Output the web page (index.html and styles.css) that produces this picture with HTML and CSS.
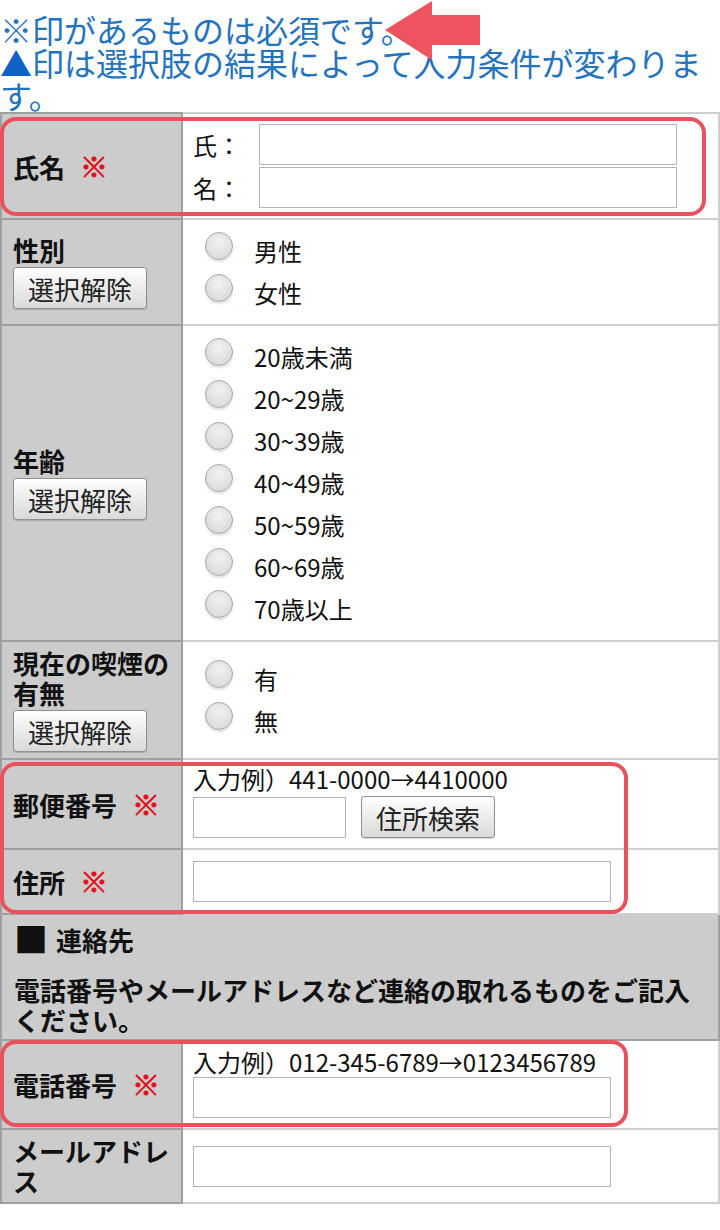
FILE: index.html
```html
<!DOCTYPE html>
<html>
<head>
  <meta charset="utf-8" />
  <title>お問い合わせフォーム</title>
  <link rel="stylesheet" href="styles.css">
</head>
<body>
  <div class="page">
    <div class="notes">
      <p>※印があるものは必須です。</p>
      <p><span class="tri">▲</span>印は選択肢の結果によって入力条件が変わります。</p>
    </div>

    <table class="form">
      <colgroup><col class="c-label"><col></colgroup>
      <tr class="r-name">
        <th>氏名<span class="req">※</span></th>
        <td>
          <div class="name-row"><span class="name-label">氏：</span><input class="text" type="text"></div>
          <div class="name-row"><span class="name-label">名：</span><input class="text" type="text"></div>
        </td>
      </tr>
      <tr>
        <th>性別<br><button class="btn">選択解除</button></th>
        <td>
          <label class="opt"><input type="radio" name="sex"><span>男性</span></label>
          <label class="opt"><input type="radio" name="sex"><span>女性</span></label>
        </td>
      </tr>
      <tr>
        <th>年齢<br><button class="btn">選択解除</button></th>
        <td class="opts">
          <label class="opt"><input type="radio" name="age"><span>20歳未満</span></label>
          <label class="opt"><input type="radio" name="age"><span>20~29歳</span></label>
          <label class="opt"><input type="radio" name="age"><span>30~39歳</span></label>
          <label class="opt"><input type="radio" name="age"><span>40~49歳</span></label>
          <label class="opt"><input type="radio" name="age"><span>50~59歳</span></label>
          <label class="opt"><input type="radio" name="age"><span>60~69歳</span></label>
          <label class="opt"><input type="radio" name="age"><span>70歳以上</span></label>
        </td>
      </tr>
      <tr>
        <th class="tight">現在の喫煙の有無<br><button class="btn">選択解除</button></th>
        <td>
          <label class="opt"><input type="radio" name="smoke"><span>有</span></label>
          <label class="opt"><input type="radio" name="smoke"><span>無</span></label>
        </td>
      </tr>
      <tr>
        <th>郵便番号<span class="req">※</span></th>
        <td class="hinted">
          <div class="hint">入力例）441-0000→4410000</div>
          <div class="zip-row"><input class="text zip" type="text"><button class="btn">住所検索</button></div>
        </td>
      </tr>
      <tr>
        <th>住所<span class="req">※</span></th>
        <td class="single"><input class="text" type="text"></td>
      </tr>
      <tr>
        <th class="section" colspan="2">
          <p><span class="sq">■</span>連絡先</p>
          <p class="lead">電話番号やメールアドレスなど連絡の取れるものをご記入ください。</p>
        </th>
      </tr>
      <tr>
        <th>電話番号<span class="req">※</span></th>
        <td class="hinted tel">
          <div class="hint">入力例）012-345-6789→0123456789</div>
          <input class="text" type="text">
        </td>
      </tr>
      <tr>
        <th class="tight">メールアドレス</th>
        <td class="single"><input class="text" type="text"></td>
      </tr>
    </table>

    <!-- annotation overlays -->
    <div class="mark mark-name"></div>
    <div class="mark mark-addr"></div>
    <div class="mark mark-tel"></div>
    <svg class="arrow" viewBox="0 0 104 64" width="104" height="64">
      <polygon points="5,30 52,1 52,15 100,15 100,45 52,45 52,60" fill="#ee5460"/>
    </svg>
  </div>
</body>
</html>
```

FILE: styles.css
```css
body {
  margin: 0;
  font-family: "Noto Sans CJK JP", sans-serif;
  color: #111;
  background: #fff;
}
.page {
  position: relative;
  width: 720px;
}
.notes {
  padding-top: 13px;
  color: #2473be;
  font-size: 32px;
  line-height: 33px;
}
.notes p {
  margin: 0;
}
.tri {
  color: #0f62c6;
}
.form {
  width: 720px;
  border-collapse: collapse;
  table-layout: fixed;
}
.form col.c-label {
  width: 181px;
}
.form th {
  background: #cccccc;
  border: 2px solid #a0a0a0;
  text-align: left;
  vertical-align: middle;
  font-size: 26px;
  line-height: 30px;
  font-weight: bold;
  padding: 7px 4px 7px 11px;
}
.form th.tight {
  padding-top: 6px;
  padding-bottom: 6px;
}
.form td {
  border: 2px solid #cfcfcf;
  border-left-color: #a0a0a0;
  padding: 10px;
  font-size: 24px;
  line-height: 30px;
  vertical-align: middle;
}
.form td.single {
  padding-top: 11px;
  padding-bottom: 11px;
}
.req {
  color: #e3101c;
  margin-left: 15px;
  font-size: 28px;
  -webkit-text-stroke: 0.8px #e3101c;
}
.text {
  display: block;
  box-sizing: border-box;
  width: 418px;
  height: 41px;
  border: 1px solid #b4b4b4;
  background: #fff;
  font-size: 22px;
  font-family: inherit;
  margin: 0;
  padding: 0 6px;
}
.name-row {
  display: flex;
  align-items: center;
}
.name-row + .name-row {
  margin-top: 2px;
}
.name-label {
  width: 66px;
}
.btn {
  height: 42px;
  padding: 0 14px;
  margin: 2px 0 0;
  font-family: inherit;
  font-size: 26px;
  font-weight: normal;
  color: #222;
  background: linear-gradient(#ffffff, #d9d9d9);
  border: 1px solid #909090;
  border-radius: 3px;
  box-shadow: 0 1px 1px rgba(0,0,0,0.15);
}
.opt {
  display: flex;
  align-items: center;
  height: 42px;
}
.opt input {
  appearance: none;
  -webkit-appearance: none;
  box-sizing: border-box;
  width: 28px;
  height: 28px;
  margin: 0 21px 10px 12px;
  border: 1px solid #a8a8a8;
  border-radius: 50%;
  background: radial-gradient(circle at 50% 35%, #f2f2f2, #d4d4d4);
  box-shadow: 0 2px 2px rgba(0,0,0,0.12);
}
.form td.hinted {
  padding-top: 4px;
  padding-bottom: 10px;
}
.form td.tel {
  padding-top: 6px;
  padding-bottom: 10px;
}
.hint {
  line-height: 30px;
}
.zip-row {
  display: flex;
  align-items: center;
  gap: 15px;
  margin-top: 2px;
}
.zip {
  width: 153px;
}
.zip-row .btn {
  margin: 0;
}
.form th.section {
  padding: 9px 12px 4px 12px;
  border-left: 2px solid #a0a0a0;
}
.section p {
  margin: 0;
}
.sq {
  font-size: 34px;
  margin-right: 8px;
  vertical-align: -2px;
}
.section .lead {
  margin-top: 20px;
}
.mark {
  position: absolute;
  left: 0;
  box-sizing: border-box;
  border: 4px solid #e9525d;
  border-radius: 16px;
}
.mark-name {
  top: 117px;
  width: 706px;
  height: 99px;
}
.mark-addr {
  top: 762px;
  width: 628px;
  height: 152px;
}
.mark-tel {
  top: 1040px;
  width: 628px;
  height: 87px;
}
.arrow {
  position: absolute;
  left: 380px;
  top: 0;
}
```
